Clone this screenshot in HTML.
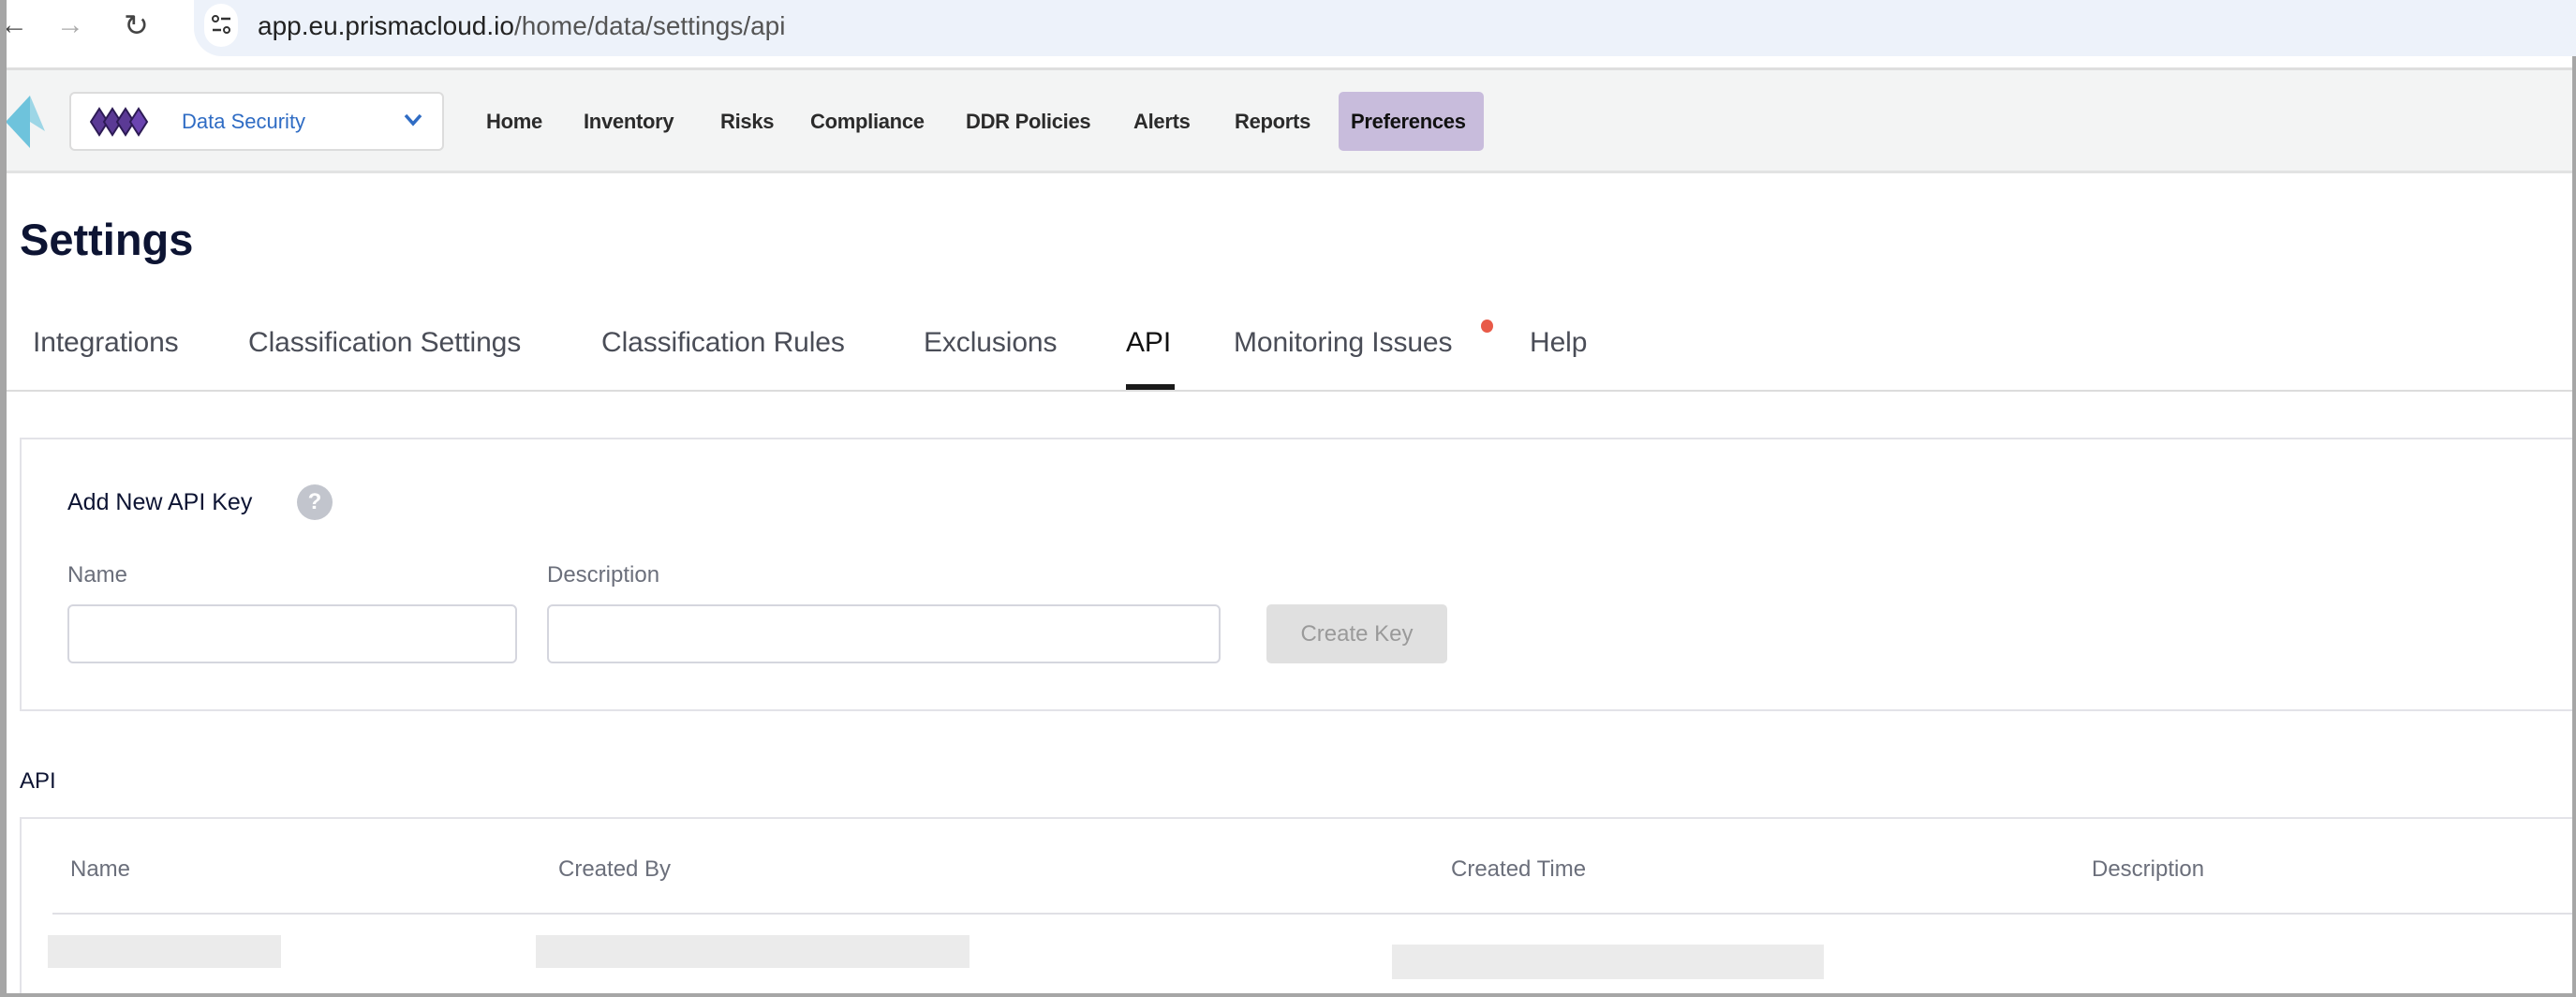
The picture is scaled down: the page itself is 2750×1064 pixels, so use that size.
<!DOCTYPE html>
<html style="overflow:hidden;width:2750px;height:1064px"><head><meta charset="utf-8"><style>
*{margin:0;padding:0;box-sizing:border-box}
body{width:2750px;height:1064px;position:relative;overflow:hidden;background:#fff;font-family:"Liberation Sans",Arial,sans-serif}
.a{position:absolute;white-space:nowrap}
.nav{font-size:22px;font-weight:bold;color:#2b2b2b;top:117px;letter-spacing:-0.3px}
.tab{font-size:30px;color:#4a4d57;top:349px;letter-spacing:-0.1px}
.lbl{font-size:24px;color:#6b6f7b}
.sk{position:absolute;background:#ebebeb}
</style></head><body>
<!-- browser bar -->
<div class="a" style="left:207px;top:0;width:2543px;height:60px;background:#edf2fa;border-radius:0 0 0 30px"></div>
<div class="a" style="left:218px;top:4px;width:36px;height:46px;background:#fff;border-radius:18px"></div>
<svg class="a" style="left:224px;top:14px" width="26" height="26"><circle cx="6" cy="6" r="3" fill="none" stroke="#333" stroke-width="2"/><line x1="12" y1="6" x2="22" y2="6" stroke="#333" stroke-width="2.5"/><line x1="3" y1="18" x2="12" y2="18" stroke="#333" stroke-width="2.5"/><circle cx="18" cy="18" r="3" fill="none" stroke="#333" stroke-width="2"/></svg>
<div class="a" style="left:0;top:10px;font-size:30px;color:#444">←</div>
<div class="a" style="left:60px;top:10px;font-size:30px;color:#aaa">→</div>
<div class="a" style="left:132px;top:8px;font-size:32px;color:#444">↻</div>
<div class="a" style="left:275px;top:12px;font-size:28px;color:#222">app.eu.prismacloud.io<span style="color:#555">/home/data/settings/api</span></div>
<div class="a" style="left:7px;top:72px;width:2739px;height:3px;background:#dedede"></div>
<!-- nav -->
<div class="a" style="left:7px;top:75px;width:2739px;height:110px;background:#f3f4f4;border-bottom:3px solid #e2e3e3"></div>
<svg class="a" style="left:4px;top:100px" width="46" height="60"><polygon points="28,2 28,58 2,30" fill="#6ec3dc"/><polygon points="28,2 44,40 28,30" fill="#9dd6e6"/></svg>
<div class="a" style="left:74px;top:98px;width:400px;height:63px;background:#fff;border:2px solid #dcdcdc;border-radius:6px"></div>
<svg class="a" style="left:96px;top:114px" width="90" height="32"><g fill="#5b3a95" stroke="#2d1b55" stroke-width="2"><polygon points="10,2 19,16 10,30 1,16"/><polygon points="24,2 33,16 24,30 15,16"/><polygon points="38,2 47,16 38,30 29,16"/><polygon points="52,2 61,16 52,30 43,16" fill="#6b44b0"/></g></svg>
<div class="a" style="left:194px;top:117px;font-size:22px;color:#2f6cc4">Data Security</div>
<svg class="a" style="left:430px;top:120px" width="22" height="16"><path d="M3 3 L11 12 L19 3" stroke="#2f6cc4" stroke-width="3.5" fill="none"/></svg>
<div class="a nav" style="left:519px">Home</div>
<div class="a nav" style="left:623px">Inventory</div>
<div class="a nav" style="left:769px">Risks</div>
<div class="a nav" style="left:865px">Compliance</div>
<div class="a nav" style="left:1031px">DDR Policies</div>
<div class="a nav" style="left:1210px">Alerts</div>
<div class="a nav" style="left:1318px">Reports</div>
<div class="a" style="left:1429px;top:98px;width:155px;height:63px;background:#c8bcdc;border-radius:5px"></div>
<div class="a nav" style="left:1442px;color:#111">Preferences</div>
<!-- title -->
<div class="a" style="left:21px;top:228px;font-size:47px;font-weight:bold;color:#0d1433">Settings</div>
<!-- tabs -->
<div class="a tab" style="left:35px">Integrations</div>
<div class="a tab" style="left:265px">Classification Settings</div>
<div class="a tab" style="left:642px">Classification Rules</div>
<div class="a tab" style="left:986px">Exclusions</div>
<div class="a tab" style="left:1202px;color:#111">API</div>
<div class="a tab" style="left:1317px">Monitoring Issues</div>
<div class="a tab" style="left:1633px">Help</div>
<div class="a" style="left:1581px;top:341px;width:13px;height:14px;border-radius:50%;background:#e85a48"></div>
<div class="a" style="left:1202px;top:410px;width:52px;height:6px;background:#1a1a1a"></div>
<div class="a" style="left:7px;top:416px;width:2739px;height:2px;background:#dcdcdc"></div>
<!-- add card -->
<div class="a" style="left:21px;top:467px;width:2729px;height:292px;border:2px solid #e3e3e8;border-right:none;background:#fff"></div>
<div class="a" style="left:72px;top:522px;font-size:25px;color:#0d1433">Add New API Key</div>
<div class="a" style="left:317px;top:517px;width:38px;height:38px;border-radius:50%;background:#c2c5cd;color:#fff;font-weight:bold;font-size:24px;text-align:center;line-height:38px">?</div>
<div class="a lbl" style="left:72px;top:600px">Name</div>
<div class="a lbl" style="left:584px;top:600px">Description</div>
<div class="a" style="left:72px;top:645px;width:480px;height:63px;border:2px solid #d5d6de;border-radius:6px"></div>
<div class="a" style="left:584px;top:645px;width:719px;height:63px;border:2px solid #d5d6de;border-radius:6px"></div>
<div class="a" style="left:1352px;top:645px;width:193px;height:63px;background:#e0e0e0;border-radius:5px;color:#9a9a9a;font-size:24px;text-align:center;line-height:63px">Create Key</div>
<!-- API table -->
<div class="a" style="left:21px;top:820px;font-size:24px;color:#0d1433">API</div>
<div class="a" style="left:21px;top:872px;width:2729px;height:192px;border-top:2px solid #e3e3e8;border-left:2px solid #e3e3e8"></div>
<div class="a lbl" style="left:75px;top:914px">Name</div>
<div class="a lbl" style="left:596px;top:914px">Created By</div>
<div class="a lbl" style="left:1549px;top:914px">Created Time</div>
<div class="a lbl" style="left:2233px;top:914px">Description</div>
<div class="a" style="left:56px;top:974px;width:2690px;height:2px;background:#e0e0e5"></div>
<div class="sk" style="left:51px;top:998px;width:249px;height:35px"></div>
<div class="sk" style="left:572px;top:998px;width:463px;height:35px"></div>
<div class="sk" style="left:1486px;top:1008px;width:461px;height:37px"></div>
<!-- frame -->
<div class="a" style="left:0;top:0;width:7px;height:1064px;background:#a6a6a6"></div>
<div class="a" style="left:2746px;top:60px;width:4px;height:1004px;background:#a6a6a6"></div>
<div class="a" style="left:0;top:1060px;width:2750px;height:4px;background:#a6a6a6"></div>
</body></html>
